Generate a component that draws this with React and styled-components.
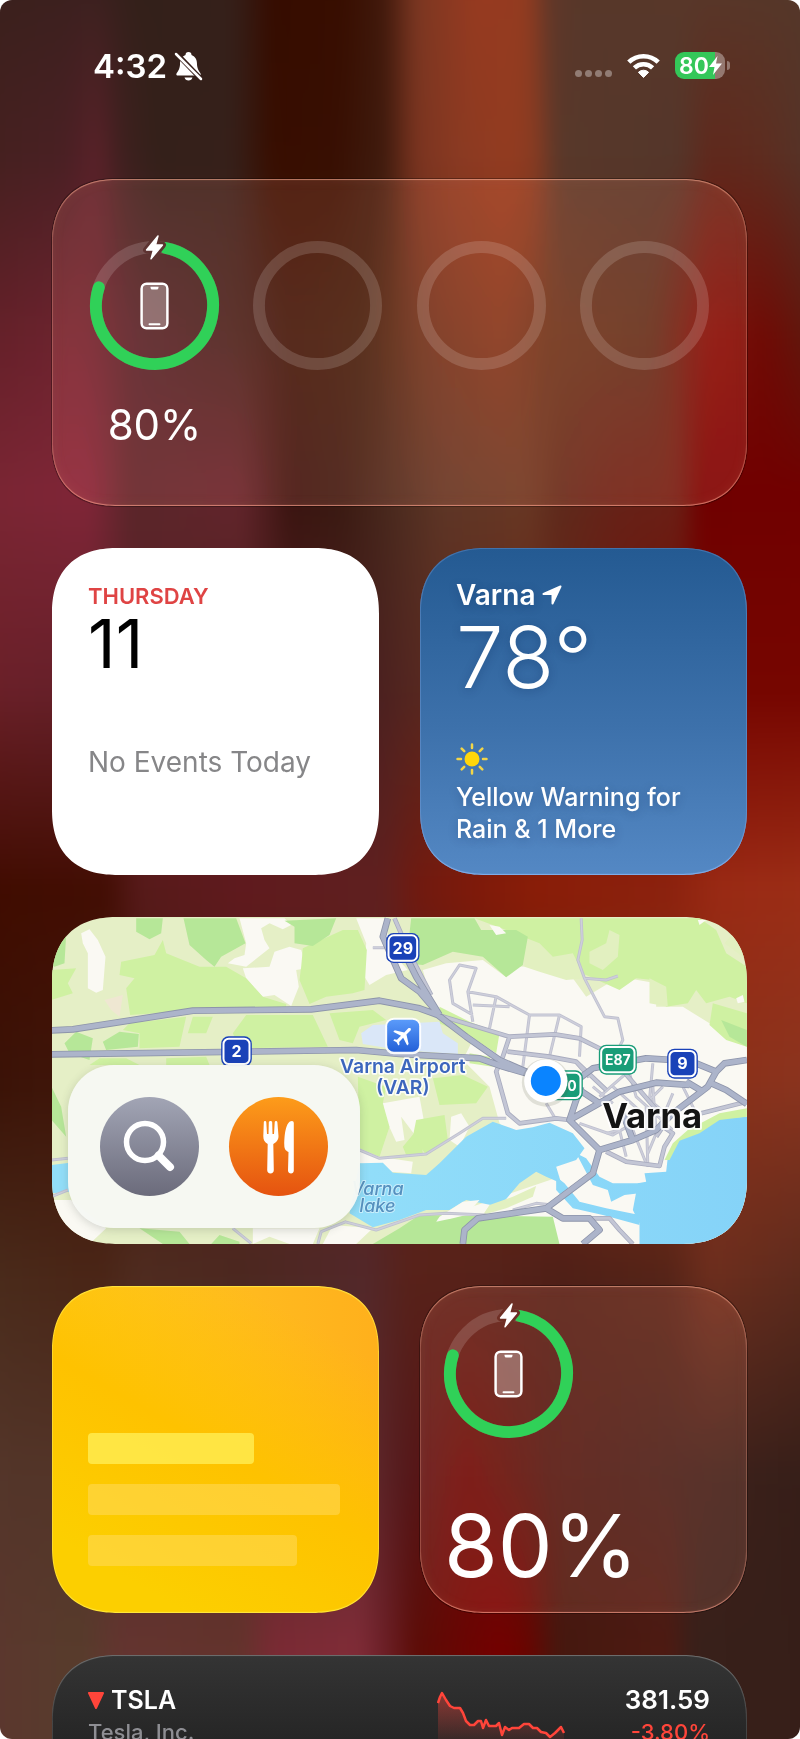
import React, { useId } from "react";
import styled, { createGlobalStyle, css } from "styled-components";

const GlobalStyle = createGlobalStyle`
  * {
    box-sizing: border-box;
  }

  body {
    margin: 0;
    background: #fff;
    font-family: "Inter", "Liberation Sans", sans-serif;
    -webkit-font-smoothing: antialiased;
  }

  p, h1, h2 {
    margin: 0;
    font-weight: inherit;
    font-size: inherit;
  }
`;

/* ---------- Wallpaper ---------- */

// Each row is a horizontal gradient, faded in over the row above it.
const wallpaperRows = [
  {
    at: 0,
    stops:
      "#3a211c 0, #3b211f 13%, #33201a 19%, #35201a 30%, #360c00 35%, #380e00 43%, #41190c 48%, #7c3823 52%, #983a20 59%, #943c20 65%, #5f3729 68%, #57382a 72%, #59382a 83%, #54382a 100%",
  },
  {
    at: 10,
    stops:
      "#45201f 0, #4a2024 10%, #5a2129 14%, #3f201f 17%, #34201a 21%, #36201a 30%, #380e00 35%, #380f02 42%, #3f1b0e 48%, #7a3420 52%, #8a3a22 57%, #933b20 63%, #883b22 66%, #58382a 69%, #54362a 83%, #60281c 87%, #5e2c1f 93%, #53352a 100%",
  },
  {
    at: 20,
    stops:
      "#642028 0, #6e2430 12%, #50242a 19%, #44221e 31%, #3c180c 37%, #40200f 46%, #6a3420 53%, #7c3820 62%, #66351f 68%, #5c301f 80%, #7c0e08 87%, #6e0c06 94%, #5c1c10 100%",
  },
  {
    at: 29,
    stops:
      "#7a2633 0, #802638 13%, #5a262a 18%, #62252c 31%, #3a1410 37%, #3a1a12 43%, #4a2a1e 49%, #5e3626 55%, #683824 65%, #5e2a1c 69%, #662218 76%, #6a2016 83%, #700000 86%, #720000 100%",
  },
  {
    at: 40,
    stops:
      "#6b2028 0, #64202a 13%, #52201e 30%, #4a2020 47%, #5a2a20 54%, #6a2416 68%, #760600 86%, #760600 100%",
  },
  {
    at: 51,
    stops:
      "#400c00 0, #430e04 15%, #571a1a 19%, #601a1e 31%, #60201f 48%, #701a10 52%, #7f1a0a 59%, #8a1d08 66%, #8c220e 82%, #9a2a14 88%, #9c2e16 100%",
  },
  {
    at: 62,
    stops:
      "#3a1206 0, #42180c 15%, #52201c 31%, #5a2220 49%, #66220f 60%, #8a3018 86%, #8a3520 100%",
  },
  {
    at: 73,
    stops:
      "#4a2c1c 0, #4a2516 14%, #4f2c20 19%, #4c2820 31%, #53282a 46%, #58221a 51%, #56221a 60%, #4f2018 69%, #552418 82%, #6c2e1e 87%, #5a2a1c 100%",
  },
  {
    at: 84,
    stops:
      "#54362a 0, #523428 14%, #5a302a 31%, #602a2e 46%, #54181a 51%, #640c08 58%, #4c1a14 68%, #43201a 82%, #3c211b 90%, #351e18 100%",
  },
  {
    at: 94,
    stops:
      "#5c362e 0, #573c2c 12%, #643430 17%, #63332c 31%, #7a2a34 35%, #802c38 45%, #6c2028 48%, #5c0c06 52%, #740000 62%, #6a0400 65%, #45180f 69%, #4e1a12 82%, #38201a 85%, #361e18 100%",
  },
];

const Wallpaper = styled.div`
  position: absolute;
  inset: -20px;
  z-index: -1;
  filter: blur(8px);
`;

const WallpaperRow = styled.div`
  position: absolute;
  inset: 0;
  background: linear-gradient(90deg, ${(props) => props.$stops});
  ${(props) =>
    props.$to > 0 &&
    css`
      mask-image: linear-gradient(
        transparent ${props.$from}%,
        #000 ${props.$to}%
      );
    `}
`;

/* ---------- Screen ---------- */

const Screen = styled.main`
  position: relative;
  isolation: isolate;
  height: 100vh;
  overflow: hidden;
  border-radius: 12px;
  color: #fff;
`;

const StatusBar = styled.header`
  display: flex;
  align-items: center;
  justify-content: space-between;
  height: 131px;
  padding: 0 70px 0 93px;
`;

const StatusGroup = styled.div`
  display: flex;
  align-items: center;
  gap: ${(props) => props.$gap}px;
`;

const Time = styled.time`
  font-size: 33px;
  line-height: 40px;
  font-weight: 600;
`;

const Signal = styled.div`
  display: flex;
  gap: 3px;
  margin-top: 16px;

  span {
    width: 7px;
    height: 7px;
    border-radius: 50%;
    background: rgba(255, 255, 255, 0.35);
  }
`;

const BatteryPill = styled.div`
  position: relative;
  display: flex;
  align-items: center;
  width: 50px;
  height: 27px;
  margin-right: 5px;
  padding-left: 4px;
  border-radius: 9px;
  background: linear-gradient(
    90deg,
    #34c759 80%,
    rgba(255, 255, 255, 0.35) 80%
  );
  font-size: 23px;
  font-weight: 600;

  &::after {
    content: "";
    position: absolute;
    right: -5px;
    top: 9px;
    width: 3px;
    height: 9px;
    border-radius: 0 4px 4px 0;
    background: rgba(255, 255, 255, 0.35);
  }
`;

const Widgets = styled.div`
  display: grid;
  grid-template-columns: 1fr 1fr;
  grid-auto-rows: 327px;
  gap: 42px 41px;
  padding: 48px 53px 0 52px;
`;

const Widget = styled.section`
  position: relative;
  display: flex;
  flex-direction: column;
  overflow: hidden;
  border-radius: 58px;
  grid-column: ${(props) => (props.$wide ? "span 2" : "auto")};

  @supports (corner-shape: superellipse(1.25)) {
    border-radius: 66px;
    corner-shape: superellipse(1.25);
  }
`;

const Glass = styled(Widget)`
  background: rgba(255, 190, 170, 0.12);
  backdrop-filter: blur(6px) saturate(1.15);
  box-shadow:
    0 0 0 1px rgba(0, 0, 0, 0.3),
    inset 0 0 0 1px rgba(255, 170, 150, 0.2),
    inset 0 1px 1px rgba(255, 180, 150, 0.5),
    inset 0 -1px 1px rgba(255, 160, 140, 0.6),
    inset 0 0 14px rgba(255, 160, 130, 0.08);
`;

/* ---------- Batteries ---------- */

const Rings = styled.div`
  display: flex;
  justify-content: space-between;
  padding: 62px 38px 0;
`;

const RingSvg = styled.svg`
  display: block;
  width: 129px;
  height: 129px;
  overflow: visible;
`;

const Device = styled.div`
  display: flex;
  flex-direction: column;
  align-items: center;
`;

const Level = styled.p`
  margin-top: 29px;
  font-size: 42px;
  line-height: 52px;
`;

const SmallBattery = styled(Glass)`
  justify-content: space-between;
  padding: 23px 24px 21px 24px;
`;

const BigLevel = styled.p`
  font-size: 87px;
  line-height: 92px;
`;

const boltPath = "M68.500 -5 L57 9 H64 L61.500 18 L73 4 H66 Z";

const Ring = ({ level }) => {
  const maskId = useId();

  if (level === undefined) {
    return (
      <RingSvg viewBox="0 0 130 130" aria-hidden="true">
        <circle cx="65" cy="65" r="59" fill="none" stroke="#fff" strokeOpacity=".15" strokeWidth="12" />
      </RingSvg>
    );
  }

  return (
    <RingSvg viewBox="0 0 130 130" role="img" aria-label={`iPhone ${level}%`}>
      <mask id={maskId} maskUnits="userSpaceOnUse" x="-10" y="-10" width="150" height="150">
        <rect x="-10" y="-10" width="150" height="150" fill="#fff" />
        <path d={boltPath} fill="#000" stroke="#000" strokeWidth="7" strokeLinejoin="round" />
      </mask>
      <g mask={`url(#${maskId})`} fill="none" strokeWidth="12">
        <circle cx="65" cy="65" r="59" stroke="#fff" strokeOpacity=".15" />
        <circle
          cx="65"
          cy="65"
          r="59"
          stroke="#30d158"
          strokeLinecap="round"
          pathLength="100"
          strokeDasharray={`${level - 3} 100`}
          transform="rotate(-79 65 65)"
        />
      </g>
      <path d={boltPath} fill="#fff" stroke="#fff" strokeWidth="1.500" strokeLinejoin="round" />
      <rect x="52" y="43" width="26" height="45" rx="5" fill="#fff" fillOpacity=".3" stroke="#fff" strokeWidth="2.500" />
      <path d="M61 46 H69 V47 Q69 49 67 49 H63 Q61 49 61 47 Z" fill="#fff" />
      <path d="M60 84 H70" stroke="#fff" strokeWidth="2" strokeLinecap="round" />
    </RingSvg>
  );
};

/* ---------- Calendar ---------- */

const Calendar = styled(Widget)`
  padding: 33px 36px;
  background: #fff;
`;

const Weekday = styled.h2`
  font-size: 22px;
  line-height: 30px;
  font-weight: 600;
  color: #df4444;
`;

const Day = styled.p`
  font-size: 68px;
  line-height: 64px;
  color: #000;
`;

const Empty = styled.p`
  margin-top: 70px;
  font-size: 28px;
  line-height: 34px;
  color: #868688;
`;

/* ---------- Weather ---------- */

const Weather = styled(Widget)`
  justify-content: space-between;
  padding: 30px 36px;
  background: linear-gradient(#245a92, #3d71ab 55%, #5488c4);
  box-shadow:
    inset 0 0 0 1px rgba(120, 160, 220, 0.35),
    inset 0 -1px 1px rgba(150, 195, 255, 0.8);
  text-shadow: 0 2px 10px rgba(0, 30, 80, 0.25);
`;

const City = styled.h2`
  display: flex;
  align-items: center;
  gap: 7px;
  font-size: 28px;
  line-height: 34px;
  font-weight: 600;
`;

const Temperature = styled.p`
  font-size: 85px;
  line-height: 92px;
  font-weight: 300;
`;

const Conditions = styled.p`
  margin-top: 6px;
  font-size: 25px;
  line-height: 32px;
  font-weight: 500;
`;

const SunIcon = styled.svg`
  display: block;
  width: 32px;
  height: 32px;
`;

/* ---------- Map ---------- */

const MapWidget = styled(Widget)`
  align-items: flex-start;
  justify-content: flex-end;
  padding: 16px;
`;

const MapSvg = styled.svg`
  position: absolute;
  inset: 0;
  width: 100%;
  height: 100%;
  font-family: "Inter", "Liberation Sans", sans-serif;
`;

const MapActions = styled.div`
  position: relative;
  display: flex;
  gap: 30px;
  padding: 32px;
  border-radius: 46px;
  background: rgba(246, 248, 244, 0.97);
  box-shadow: 0 2px 10px rgba(60, 70, 60, 0.2);
`;

const MapButton = styled.button`
  display: grid;
  place-items: center;
  width: 99px;
  height: 99px;
  padding: 0;
  border: 0;
  border-radius: 50%;
  background: ${(props) => props.$fill};
`;

const roads = {
  minor: [
    "M36 780L85 775M36 890L85 870M580 985L635 1030M1000 143H1045",
    "M960 750L1020 775 1160 762 1260 700 1330 655 1400 655M915 965L1010 990 1140 945 1220 940 1340 945",
    "M835 1032L845 995 920 965M1420 930L1490 910 1540 915",
    "M1625 55L1628 120 1615 180 1635 235 1695 350 1735 355 1750 420 1740 440M1635 235L1700 240 1735 228",
    "M1300 365L1285 275 1310 205 1260 195 1230 240 1240 310 1300 345",
    "M1285 275L1370 290 1470 345 1560 345 1625 380 1620 470M1370 290L1350 385M1300 315L1410 320",
    "M1470 345L1450 500M1560 345L1530 470M1400 455L1530 470 1610 485",
    "M1840 490L1830 600M1680 590L1760 520M1820 620L1825 800M1900 580L1825 760M1930 560L1970 640",
    "M1620 670L1720 705 1780 670M1720 560L1820 650M1780 690L1820 790M1840 560L1850 700M1520 610L1550 660",
    "M1660 560L1720 610M1700 700L1740 690 1760 770M1770 520L1790 590 1900 690M1870 560L1830 600 1890 650",
  ],
  mid: [
    "M1195 345L1410 410 1545 403 1620 415 1690 450M1410 410L1390 470 1370 515 1405 640 1440 670 1550 655 1590 660",
    "M1405 455L1530 470 1610 485 1700 570M1740 500L1860 640M1700 755L1760 785 1860 798 1875 740 1900 700 1870 680 1850 710",
    "M1640 955H1710L1740 990 1780 1032M1985 640L2122 605M1610 485L1650 530",
    "M1065 55L1115 170 1175 285",
  ],
  major: [
    "M36 391L100 388 460 332 815 328 1020 302 1140 325 1195 345 1280 410 1380 480 1460 515 1500 540",
    "M36 463L550 456 950 450 1080 462 1320 475 1390 500 1460 520",
    "M1045 55L1030 110 1085 235 1140 275 1200 345M1100 170L1130 230 1200 345",
    "M1620 535L1660 505 1740 490 1820 475 1900 480 1970 490 2030 515 2005 560 1900 640 1850 690 1780 720 1680 750 1590 660 1610 600 1625 560",
    "M1590 660L1670 615 1740 575 1850 548 1950 555M1940 545L1990 575M2005 545L2060 570 2122 612M2030 515L2055 490 2122 480M1620 570L1680 610",
    "M1680 750L1660 820 1520 925 1315 955 1275 990 1270 1032M1520 925L1570 955 1650 955 1680 990 1630 1032M1780 720L1750 640",
  ],
};

const Roads = ({ kind, edge, fill, width }) => {
  const d = roads[kind].join("");
  return (
    <g fill="none" strokeLinejoin="round">
      <path d={d} stroke={edge} strokeWidth={width} />
      <path d={d} stroke={fill} strokeWidth={width - 5} />
    </g>
  );
};

const Shield = ({ x, y, width, fill, size = 48, children }) => (
  <g>
    <rect x={x} y={y} width={width} height="90" rx="22" fill={fill} />
    <rect x={x + 7} y={y + 7} width={width - 14} height="76" rx="16" fill={fill} stroke="#fff" strokeWidth="6" />
    <text x={x + width / 2} y={y + 62} textAnchor="middle" fontSize={size} fontWeight="700" fill="#fff">
      {children}
    </text>
  </g>
);

const CityMap = () => (
  <MapSvg viewBox="36 51 2088 981" preserveAspectRatio="xMidYMid slice" role="img" aria-label="Map of Varna">
    <defs>
      <linearGradient id="airport" x2="0" y2="1">
        <stop stopColor="#5b9bfa" />
        <stop offset="1" stopColor="#2460d8" />
      </linearGradient>
      <linearGradient id="sea" gradientUnits="userSpaceOnUse" x1="900" x2="2124">
        <stop stopColor="#92def9" />
        <stop offset="1" stopColor="#85d3f8" />
      </linearGradient>
    </defs>

    <rect x="36" y="51" width="2088" height="981" fill="#e5efc6" />

    {/* built-up land */}
    <g fill="#faf9f3">
      <path d="M1150 210L1220 190 1330 180 1400 232 1400 198 1460 200 1600 235 1640 290 1740 230 1850 250 1850 320 1930 320 2010 370 2070 420 2122 440V1032H1180L1240 940 1560 830 1380 670 1350 560 1270 480 1300 420 1190 350Z" />
      <path d="M125 100L150 88 175 120 198 170 190 270 170 278 145 265 145 160 130 130Z" />
      <path d="M600 55H735L755 75 730 88 690 70 665 85 675 120 690 145 620 200 565 190 585 175 615 165 620 130Z" />
      <path d="M610 205L690 200 705 155 750 140 785 150 802 205 770 210 778 260 755 318 705 285 670 290 620 235Z" />
      <path d="M950 55H1040L1050 150 1105 210 1040 225 990 255 975 230 980 130Z" />
      <path d="M1030 610L1140 590 1160 700 1130 710 1085 650 1095 720 1070 725 1040 660Z" />
      <path d="M960 750L1020 770 1120 785 1115 820 1050 815 960 790ZM36 900L95 900 200 985 150 1032H36ZM640 985L840 985 820 1032 750 1032 690 1010 640 1032ZM880 975L1000 985 950 1032 850 1032Z" />
      <path d="M1235 650L1265 640 1290 680 1260 740 1230 720Z" />
    </g>
    <path d="M195 300L250 285 240 350 215 330Z" fill="#efe7d2" />

    {/* woods and fields */}
    <g fill="#cff1a2">
      <path d="M245 185L345 165 370 120 380 160 480 200 560 200 620 235 670 290 740 312 740 330 460 332 272 345 260 265 285 235 240 225Z" />
      <path d="M785 200L790 145 910 90 955 90 982 150 975 270 940 280 860 290 810 312 780 240Z" />
      <path d="M36 210L110 205 85 250 100 280 36 300ZM270 370L440 350 420 440 300 445 300 400 250 390ZM620 345L820 345 865 440 600 445 580 400Z" />
      <path d="M460 350L520 350 500 400 445 400ZM180 475H260L300 495H150ZM380 475L500 470 510 495H380ZM870 340L1000 330 1040 360 960 380 940 430 900 420Z" />
      <path d="M955 530L1040 560 1030 610 1050 680 1020 770 960 745ZM1090 740L1140 680 1150 760 1100 765Z" />
      <path d="M1305 55H1980L2030 90 2060 160 2122 200V310L2070 290 2000 310 1970 270 1945 310 1880 320 1840 240 1790 235 1740 270 1640 225 1580 210 1460 180 1450 110 1400 90Z" />
      <path d="M2020 310L2122 340V440L2060 420 2010 375ZM1180 535L1270 525 1345 560 1310 610 1200 615ZM1130 660L1215 645 1225 720 1160 765 1120 710Z" />
      <path d="M1200 320L1290 365 1380 400 1370 460 1310 420 1200 370ZM1290 460L1350 470 1360 500 1290 490Z" />
    </g>
    <path d="M1450 110L1500 130 1540 170 1600 160 1620 200 1640 235 1580 240 1500 215 1455 200ZM1650 155L1700 130 1710 90 1740 105 1735 170 1690 210 1650 190ZM1830 235L1880 260 1885 320 1830 310ZM2055 130L2090 90 2122 130V180Z" fill="#e2f0c0" />
    <g fill="#b6e798">
      <path d="M290 55H370L365 100 330 118 290 95ZM432 55H590L618 130 545 170 525 200 500 180 450 135ZM735 62L890 55 870 105 820 138 765 130 765 80ZM36 90L80 105 75 190 45 200 36 195Z" />
      <path d="M75 430L110 395 160 415 150 480 90 460ZM190 425L240 395 298 402 295 440 200 450ZM36 560L65 620 80 710 36 660Z" />
      <path d="M1115 55H1305L1325 90 1430 90 1465 110 1450 195 1400 232 1330 170 1240 155 1150 195 1100 190ZM2045 360L2122 390V440L2070 410Z" />
      <path d="M300 985L420 995 450 1032H370ZM515 1032L540 1005 600 1025V1032ZM1000 1032L1080 985 1140 945 1540 950 1560 1032Z" />
    </g>
    <path d="M1350 75L1380 80 1400 100 1370 105ZM1975 60H2000L1980 75ZM2090 295L2110 285 2115 305 2095 310Z" fill="#faf9f3" />
    <path d="M965 400L1000 375 1200 365 1210 400 1255 430V462L1080 450 970 432Z" fill="#dae7f8" />

    {/* lake, canals and sea */}
    <g fill="url(#sea)">
      <path d="M960 790L1030 788 1060 818 1160 825 1200 790 1280 710 1360 665 1430 690 1480 682 1530 668 1600 700 1635 745 1610 780 1550 800 1565 850 1520 830 1490 815 1440 850 1380 920 1280 900 1230 930 1160 930 1080 960 1000 982 930 940Z" />
      <path d="M2124 650L2040 655 1970 700 1920 720 1885 770 1880 815 1815 820 1820 845 1795 850 1780 930 1800 970V1032H2124Z" />
      <path d="M36 795L90 788V875L36 880Z" />
      <path d="M1550 830L1575 850 1620 905 1700 925 1800 945V975L1690 945 1600 925 1550 870ZM1610 760L1640 775 1680 830 1720 850 1800 850V880L1755 885 1715 905 1705 870 1660 855Z" />
    </g>
    <path d="M2122 625L2040 640 1945 690 1900 730 1875 780 1890 780 1920 722 1980 700 2040 660 2122 650Z" fill="#cff1a2" />
    <path d="M1490 858L1480 890 1400 925 1330 945 1350 915 1420 890Z" fill="#e2f0c0" />
    <path d="M1190 965L1240 955 1280 945 1320 900 1270 905 1200 950Z" fill="#faf9f3" />

    <Roads kind="minor" edge="#bfc0cf" fill="#cecfdb" width={9} />
    <Roads kind="mid" edge="#a9acbf" fill="#c3c6d5" width={14} />
    <Roads kind="major" edge="#8d94aa" fill="#acb4ca" width={20} />

    <Shield x={1040} y={99} width={100} fill="#1a42b8">29</Shield>
    <Shield x={545} y={409} width={92} fill="#1a42b8">2</Shield>
    <Shield x={1678} y={434} width={114} fill="#199d78" size={42}>E87</Shield>
    <Shield x={1883} y={446} width={92} fill="#1a42b8">9</Shield>
    <Shield x={1516} y={511} width={114} fill="#199d78" size={42}>E70</Shield>

    <rect x="1037" y="353" width="108" height="110" rx="26" fill="#fff" fillOpacity=".9" />
    <rect x="1043" y="359" width="96" height="96" rx="20" fill="url(#airport)" />
    <path
      d="M21 16v-2l-8-5V3.500c0-.83-.67-1.500-1.500-1.500S10 2.670 10 3.500V9l-8 5v2l8-2.500V19l-2 1.500V22l3.500-1 3.500 1v-1.500L13 19v-5.500l8 2.500z"
      fill="#fff"
      transform="translate(1091 407) rotate(45) scale(3.100) translate(-11.500 -12)"
    />

    <g textAnchor="middle" paintOrder="stroke" strokeLinejoin="round" stroke="#fff" strokeOpacity=".85">
      <g fontSize="58" fontWeight="600" fill="#3c66bd" strokeWidth="10">
        <text x="1090" y="520">Varna Airport</text>
        <text x="1090" y="582">(VAR)</text>
      </g>
      <g fontSize="54" fontWeight="500" fontStyle="italic" fill="#5590bf" strokeWidth="6" strokeOpacity=".5">
        <text x="1014" y="884">Varna</text>
        <text x="1014" y="937">lake</text>
      </g>
      <text x="1838" y="683" fontSize="104" fontWeight="700" fill="#141414" strokeWidth="12">
        Varna
      </text>
    </g>

    <circle cx="1519" cy="548" r="72" fill="#50503c" fillOpacity=".15" />
    <circle cx="1519" cy="543" r="65" fill="#fff" />
    <circle cx="1519" cy="543" r="45" fill="#0a84ff" />
  </MapSvg>
);

/* ---------- Notes ---------- */

const Notes = styled(Widget)`
  justify-content: flex-end;
  gap: 20px;
  padding: 0 36px 47px;
  background:
    linear-gradient(30deg, #fccf00 15%, #fec200 50%, rgba(255, 184, 20, 0) 85%),
    linear-gradient(90deg, #ffca24, #ffb01c);
  box-shadow:
    inset 0 0 0 1px rgba(255, 225, 60, 0.6),
    inset 0 1px 1px #ffe440,
    inset 0 -1px 1px #fff040;
`;

const NoteLine = styled.div`
  width: ${(props) => props.$width};
  height: 31px;
  border-radius: 4px;
  background: ${(props) =>
    props.$strong ? "rgba(255, 240, 90, 0.75)" : "rgba(255, 220, 100, 0.5)"};
`;

/* ---------- Stocks ---------- */

const Stocks = styled(Widget)`
  padding: 28px 37px 28px 36px;
  background: linear-gradient(#343434, #262626 84px, #1c1c1c);
  box-shadow:
    inset 0 0 0 1px rgba(255, 255, 255, 0.12),
    inset 0 1px 1px rgba(255, 255, 255, 0.2);
`;

const StockRow = styled.div`
  display: grid;
  grid-template-columns: 1fr 128px 145px;
`;

const Symbol = styled.h2`
  display: flex;
  align-items: center;
  gap: 7px;
  font-size: 25px;
  line-height: 34px;
  font-weight: 600;
`;

const Company = styled.p`
  font-size: 22px;
  line-height: 30px;
  font-weight: 500;
  color: #8e8e93;
`;

const Quote = styled.div`
  text-align: right;
`;

const Price = styled.p`
  font-size: 26px;
  line-height: 34px;
  font-weight: 600;
`;

const Change = styled.p`
  font-size: 22px;
  line-height: 30px;
  font-weight: 500;
  color: #ff453a;
`;

const sparkline =
  "M1 20L3 14 5 10 9 17 13 23 17 25 23 25 26 30 29 38 33 42 37 42 41 38 44 38 46 45 49 37 52 43 59 43 62 40 65 52 68 44 72 47 75 45 82 45 87 41 92 41 96 45 100 45 104 49 109 50 113 54 118 50 124 44 127 50";

const App = () => (
  <>
    <GlobalStyle />
    <Screen>
      <Wallpaper>
        {wallpaperRows.map((row, index) => (
          <WallpaperRow
            key={row.at}
            $from={index ? wallpaperRows[index - 1].at : 0}
            $to={row.at}
            $stops={row.stops}
          />
        ))}
      </Wallpaper>

      <StatusBar>
        <StatusGroup $gap={7}>
          <Time>4:32</Time>
          <svg width="29" height="30" viewBox="0 0 29 30" aria-label="Silent mode">
            <path d="M14.500 1C16.500 1 17.500 2 17.500 4C21.500 5.500 23 9 23 13C23 18 25.500 20.500 26.500 22.500C27 24 26.500 24.500 25 24.500H4C2.500 24.500 2 24 2.500 22.500C3.500 20.500 6 18 6 13C6 9 7.500 5.500 11.500 4C11.500 2 12.500 1 14.500 1Z" fill="#fff" />
            <path d="M10.500 26.500H18.500C18 28.500 16.500 29.500 14.500 29.500S11 28.500 10.500 26.500Z" fill="#fff" />
            <path d="M2 2L28 29" stroke="#361f1a" strokeWidth="5" />
            <path d="M2 3L27 28" stroke="#fff" strokeWidth="2.500" strokeLinecap="round" />
          </svg>
        </StatusGroup>
        <StatusGroup $gap={15}>
          <Signal aria-label="No signal">
            <span />
            <span />
            <span />
            <span />
          </Signal>
          <svg width="33" height="25" viewBox="0 0 33 25" aria-label="Wi-Fi">
            <g fill="none" stroke="#fff" strokeWidth="4.600">
              <path d="M1.800 9.200A21 21 0 0 1 31.200 9.200" />
              <path d="M7.400 14.900A13.200 13.200 0 0 1 25.600 14.900" />
            </g>
            <path d="M16.500 24.500L11.400 19.300A7.300 7.300 0 0 1 21.600 19.300Z" fill="#fff" stroke="#fff" strokeWidth="1" strokeLinejoin="round" />
          </svg>
          <BatteryPill>
            80
            <svg width="13" height="19" viewBox="0 0 13 19" aria-label="Charging">
              <path d="M8.500 0L0 11H5.500L4 19L13 7.500H7Z" fill="#fff" />
            </svg>
          </BatteryPill>
        </StatusGroup>
      </StatusBar>

      <Widgets>
        <Glass $wide aria-label="Batteries">
          <Rings>
            <Device>
              <Ring level={80} />
              <Level>80%</Level>
            </Device>
            <Ring />
            <Ring />
            <Ring />
          </Rings>
        </Glass>

        <Calendar>
          <Weekday>THURSDAY</Weekday>
          <Day>11</Day>
          <Empty>No Events Today</Empty>
        </Calendar>

        <Weather>
          <div>
            <City>
              Varna
              <svg width="20" height="20" viewBox="0 0 20 20" aria-hidden="true">
                <path d="M18.500 1.500L1.500 9H10.500V18.500Z" fill="#fff" stroke="#fff" strokeWidth="2" strokeLinejoin="round" />
              </svg>
            </City>
            <Temperature>78°</Temperature>
          </div>
          <div>
            <SunIcon viewBox="0 0 32 32" aria-label="Sunny">
              <circle cx="16" cy="16" r="7.500" fill="#ffd60a" />
              <path
                d="M16 1.500V5M16 27V30.500M1.500 16H5M27 16H30.500M5.700 5.700L8.200 8.200M23.800 23.800L26.300 26.300M5.700 26.300L8.200 23.800M23.800 8.200L26.300 5.700"
                stroke="#f2d548"
                strokeWidth="2.500"
                strokeLinecap="round"
              />
            </SunIcon>
            <Conditions>Yellow Warning for Rain &amp; 1 More</Conditions>
          </div>
        </Weather>

        <MapWidget $wide>
          <CityMap />
          <MapActions>
            <MapButton type="button" aria-label="Search" $fill="linear-gradient(#a2a5b5, #6b6b7b)">
              <svg width="53" height="53" viewBox="0 0 53 53" fill="none" stroke="#fff">
                <circle cx="22" cy="22" r="18.500" strokeWidth="5.500" />
                <path d="M35.500 35.500L47 47" strokeWidth="8" strokeLinecap="round" />
              </svg>
            </MapButton>
            <MapButton type="button" aria-label="Restaurants" $fill="linear-gradient(#fd9c1a, #e55310)">
              <svg width="32" height="54" viewBox="0 0 32 54" fill="#fff">
                <path d="M2 1C2.800 1 3.200 1.500 3.300 2.500L4 14H5.500L5.800 2.500C5.900 1.500 6.500 1 7.500 1S9.100 1.500 9.200 2.500L9.500 14H11L11.700 2.500C11.800 1.500 12.200 1 13 1S14.300 1.500 14.400 2.500L15.500 16C15.500 20 13.500 22 10.300 24L10.800 50C10.800 52 9.500 53.500 7.500 53.500S4.200 52 4.200 50L4.700 24C1.500 22 .3 20 .3 16L.8 2.500C.9 1.500 1.200 1 2 1Z" />
                <path d="M29 1C30 1 30.800 1.800 30.800 3V50.500C30.800 52.500 29.500 53.500 28 53.500S25 52.500 25 50.500L25.500 32C22.500 30.500 21.300 29 21.300 25C21.300 14 23 1 29 1Z" />
              </svg>
            </MapButton>
          </MapActions>
        </MapWidget>

        <Notes aria-label="Notes">
          <NoteLine $strong $width="65%" />
          <NoteLine $width="99%" />
          <NoteLine $width="82%" />
        </Notes>

        <SmallBattery aria-label="Battery">
          <Ring level={80} />
          <BigLevel>80%</BigLevel>
        </SmallBattery>

        <Stocks $wide>
          <StockRow>
            <div>
              <Symbol>
                <svg width="16" height="17" viewBox="0 0 16 17" aria-label="Down">
                  <path d="M1 1H15L8 16Z" fill="#ff453a" stroke="#ff453a" strokeWidth="2" strokeLinejoin="round" />
                </svg>
                TSLA
              </Symbol>
              <Company>Tesla, Inc.</Company>
            </div>
            <svg width="128" height="68" viewBox="0 0 128 68" aria-hidden="true">
              <defs>
                <linearGradient id="spark" x2="0" y2="1">
                  <stop stopColor="#ff453a" stopOpacity=".45" />
                  <stop offset="1" stopColor="#ff453a" stopOpacity="0" />
                </linearGradient>
              </defs>
              <path d={`${sparkline}V68H1Z`} fill="url(#spark)" />
              <path d={sparkline} fill="none" stroke="#ff453a" strokeWidth="2.500" strokeLinejoin="round" />
            </svg>
            <Quote>
              <Price>381.59</Price>
              <Change>-3.80%</Change>
            </Quote>
          </StockRow>
        </Stocks>
      </Widgets>
    </Screen>
  </>
);

export default App;
